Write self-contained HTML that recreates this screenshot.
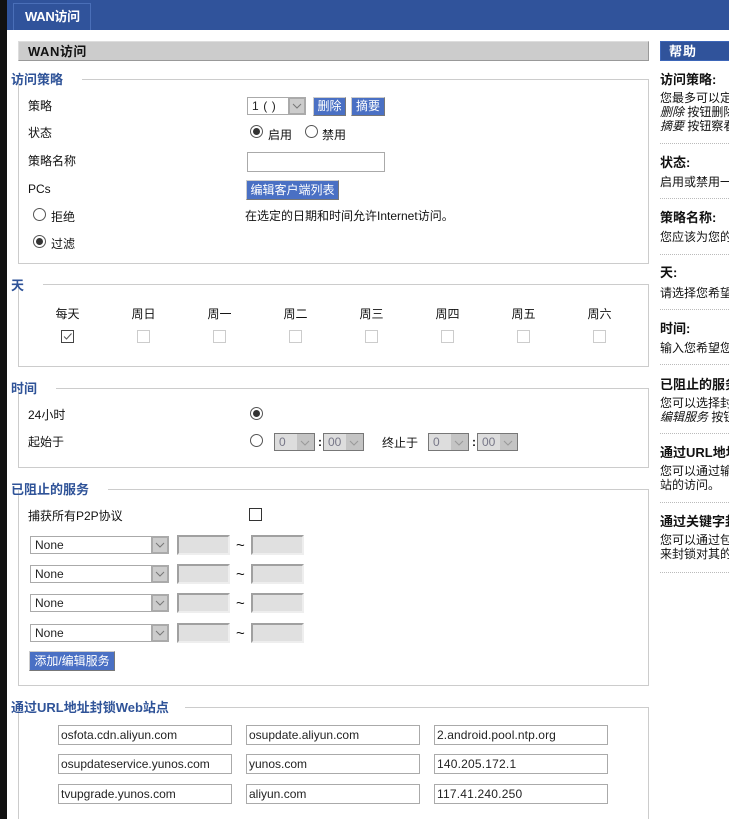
<!DOCTYPE html>
<html lang="zh">
<head>
<meta charset="utf-8">
<title>WAN访问</title>
<style>
html,body{margin:0;padding:0;width:729px;height:819px;overflow:hidden;background:#fff}
body{position:relative;font:12px/14px "Liberation Sans","WenQuanYi Zen Hei","Noto Sans CJK SC",sans-serif;color:#111}
div,span{position:absolute;box-sizing:border-box}
.t{white-space:nowrap;line-height:14px}
.c{transform:translateX(-50%)}
.fs{left:18px;width:631px;border:1px solid #ccc}
.gap{background:#fff;height:2px;left:18px}
.lg{left:11px;height:16px;font-weight:bold;font-size:13px;line-height:16px;color:#2f5398;white-space:nowrap}
.btn{background:#4a70c4;color:#fff;border:1px solid;border-color:#ccc #777 #777 #ccc;text-align:center;line-height:17px;white-space:nowrap}
.r{width:13px;height:13px;border:1px solid #555;border-radius:50%;background:#fff}
.r.on::after{content:"";position:absolute;left:2px;top:2px;width:7px;height:7px;border-radius:50%;background:#333}
.cb{width:13px;height:13px;border:1px solid #ccc;background:#fff}
.sel{height:18px;border:1px solid #aaa;background:#fff;line-height:16px;padding-left:4px;white-space:nowrap;color:#222}
.ar{right:-1px;top:-1px;bottom:-1px;width:18px;background:#ccc;border:2px solid #aaa}
.ar svg{position:absolute;left:2px;top:3px}
.tsel{width:41px;top:433px;height:18px;border:1px solid #777;background:#ddd;color:#778;line-height:16px;padding-left:4px}
.tsel .ar{right:0;top:0;bottom:0;width:17px;background:#c4c4c4;border:0}
.tsel .ar svg{left:3px;top:5px}
.in{height:20px;border:1px solid #aaa;background:#fff;line-height:18px;padding-left:2px;white-space:nowrap;color:#222}
.dis{width:53px;height:20px;background:#e0e0e0;border:2px solid;border-color:#a0a0a0 #eee #eee #a0a0a0}
.tl{font-size:15px;left:236px}
.h{left:660px;white-space:nowrap;font-weight:bold;font-size:13px;line-height:16px;color:#111}
.p{left:660px;white-space:nowrap;line-height:14px}
.d{left:660px;width:69px;border-top:1px dotted #bbb;height:1px}
</style>
</head>
<body>
<div style="left:0;top:0;width:7px;height:819px;background:#111"></div>
<div style="left:7px;top:0;width:722px;height:30px;background:#30539b"></div>
<div style="left:13px;top:3px;width:78px;height:27px;border:1px solid #4a6fb8;border-bottom:0"></div>
<div class="t" style="left:25px;top:10px;color:#fff;font-weight:bold;font-size:13px;letter-spacing:-.3px">WAN访问</div>

<div style="left:18px;top:41px;width:631px;height:20px;background:#ccc;border-top:1px solid #ddd;border-left:1px solid #ddd;border-bottom:1px solid #999;border-right:1px solid #999"></div>
<div class="t" style="left:28px;top:45px;font-weight:bold;font-size:13px;letter-spacing:.5px;color:#111">WAN访问</div>

<div class="fs" style="top:79px;height:185px"></div>
<div class="gap" style="top:78px;width:64px"></div>
<div class="lg" style="top:72px">访问策略</div>
<div class="t" style="left:28px;top:99px">策略</div>
<div class="sel" style="left:247px;top:97px;width:59px;letter-spacing:.6px">1 ( )<span class="ar"><svg width="10" height="8"><path d="M1 2l4 4 4-4" fill="none" stroke="#777"/></svg></span></div>
<div class="btn" style="left:313px;top:97px;width:33px;height:19px">删除</div>
<div class="btn" style="left:351px;top:97px;width:34px;height:19px">摘要</div>
<div class="t" style="left:28px;top:126px">状态</div>
<div class="r on" style="left:250px;top:125px"></div>
<div class="t" style="left:268px;top:128px">启用</div>
<div class="r" style="left:305px;top:125px"></div>
<div class="t" style="left:322px;top:128px">禁用</div>
<div class="t" style="left:28px;top:154px">策略名称</div>
<div class="in" style="left:247px;top:152px;width:138px"></div>
<div class="t" style="left:28px;top:182px">PCs</div>
<div class="btn" style="left:246px;top:180px;width:93px;height:20px;line-height:18px">编辑客户端列表</div>
<div class="r" style="left:33px;top:208px"></div>
<div class="t" style="left:51px;top:210px">拒绝</div>
<div class="t" style="left:245px;top:209px">在选定的日期和时间允许Internet访问。</div>
<div class="r on" style="left:33px;top:235px"></div>
<div class="t" style="left:51px;top:237px">过滤</div>

<div class="fs" style="top:284px;height:83px"></div>
<div class="gap" style="top:283px;width:25px"></div>
<div class="lg" style="top:278px">天</div>
<div class="t c" style="left:67.5px;top:307px">每天</div>
<div class="t c" style="left:143.5px;top:307px">周日</div>
<div class="t c" style="left:219.5px;top:307px">周一</div>
<div class="t c" style="left:295.5px;top:307px">周二</div>
<div class="t c" style="left:371.5px;top:307px">周三</div>
<div class="t c" style="left:447.5px;top:307px">周四</div>
<div class="t c" style="left:523.5px;top:307px">周五</div>
<div class="t c" style="left:599.5px;top:307px">周六</div>
<div class="cb" style="left:61px;top:330px;border-color:#444"><svg width="11" height="11" style="position:absolute;left:0;top:0"><path d="M2 5.5l2.5 2.5L9.5 2.5" fill="none" stroke="#555" stroke-width="1"/></svg></div>
<div class="cb" style="left:137px;top:330px"></div>
<div class="cb" style="left:213px;top:330px"></div>
<div class="cb" style="left:289px;top:330px"></div>
<div class="cb" style="left:365px;top:330px"></div>
<div class="cb" style="left:441px;top:330px"></div>
<div class="cb" style="left:517px;top:330px"></div>
<div class="cb" style="left:593px;top:330px"></div>

<div class="fs" style="top:388px;height:80px"></div>
<div class="gap" style="top:387px;width:38px"></div>
<div class="lg" style="top:381px">时间</div>
<div class="t" style="left:28px;top:408px">24小时</div>
<div class="r on" style="left:250px;top:407px"></div>
<div class="t" style="left:28px;top:435px">起始于</div>
<div class="r" style="left:250px;top:434px"></div>
<div class="tsel" style="left:274px">0<span class="ar"><svg width="10" height="8"><path d="M1 2l4 4 4-4" fill="none" stroke="#999"/></svg></span></div>
<div class="t" style="left:318px;top:435px;font-weight:bold">:</div>
<div class="tsel" style="left:323px">00<span class="ar"><svg width="10" height="8"><path d="M1 2l4 4 4-4" fill="none" stroke="#999"/></svg></span></div>
<div class="t" style="left:382px;top:436px">终止于</div>
<div class="tsel" style="left:428px">0<span class="ar"><svg width="10" height="8"><path d="M1 2l4 4 4-4" fill="none" stroke="#999"/></svg></span></div>
<div class="t" style="left:472px;top:435px;font-weight:bold">:</div>
<div class="tsel" style="left:477px">00<span class="ar"><svg width="10" height="8"><path d="M1 2l4 4 4-4" fill="none" stroke="#999"/></svg></span></div>

<div class="fs" style="top:489px;height:197px"></div>
<div class="gap" style="top:488px;width:90px"></div>
<div class="lg" style="top:482px">已阻止的服务</div>
<div class="t" style="left:28px;top:509px">捕获所有P2P协议</div>
<div class="cb" style="left:249px;top:508px;border-color:#333"></div>

<div class="sel" style="left:30px;top:536px;width:139px">None<span class="ar"><svg width="10" height="8"><path d="M1 2l4 4 4-4" fill="none" stroke="#777"/></svg></span></div>
<div class="dis" style="left:177px;top:535px"></div>
<div class="t tl" style="top:539px">~</div>
<div class="dis" style="left:251px;top:535px"></div>

<div class="sel" style="left:30px;top:565px;width:139px">None<span class="ar"><svg width="10" height="8"><path d="M1 2l4 4 4-4" fill="none" stroke="#777"/></svg></span></div>
<div class="dis" style="left:177px;top:564px"></div>
<div class="t tl" style="top:568px">~</div>
<div class="dis" style="left:251px;top:564px"></div>

<div class="sel" style="left:30px;top:594px;width:139px">None<span class="ar"><svg width="10" height="8"><path d="M1 2l4 4 4-4" fill="none" stroke="#777"/></svg></span></div>
<div class="dis" style="left:177px;top:593px"></div>
<div class="t tl" style="top:597px">~</div>
<div class="dis" style="left:251px;top:593px"></div>

<div class="sel" style="left:30px;top:624px;width:139px">None<span class="ar"><svg width="10" height="8"><path d="M1 2l4 4 4-4" fill="none" stroke="#777"/></svg></span></div>
<div class="dis" style="left:177px;top:623px"></div>
<div class="t tl" style="top:627px">~</div>
<div class="dis" style="left:251px;top:623px"></div>

<div class="btn" style="left:29px;top:651px;width:86px;height:20px;line-height:18px">添加/编辑服务</div>

<div class="fs" style="top:707px;height:130px"></div>
<div class="gap" style="top:706px;width:167px"></div>
<div class="lg" style="top:700px">通过URL地址封锁Web站点</div>
<div class="in" style="left:58px;top:725px;width:174px">osfota.cdn.aliyun.com</div>
<div class="in" style="left:246px;top:725px;width:174px">osupdate.aliyun.com</div>
<div class="in" style="left:434px;top:725px;width:174px;letter-spacing:.1px">2.android.pool.ntp.org</div>
<div class="in" style="left:58px;top:754px;width:174px">osupdateservice.yunos.com</div>
<div class="in" style="left:246px;top:754px;width:174px">yunos.com</div>
<div class="in" style="left:434px;top:754px;width:174px;letter-spacing:.2px">140.205.172.1</div>
<div class="in" style="left:58px;top:784px;width:174px">tvupgrade.yunos.com</div>
<div class="in" style="left:246px;top:784px;width:174px">aliyun.com</div>
<div class="in" style="left:434px;top:784px;width:174px;letter-spacing:.2px">117.41.240.250</div>

<div style="left:660px;top:41px;width:69px;height:20px;background:#30539b;border:1px solid #3d66b8;border-right:0"></div>
<div class="t" style="left:669px;top:45px;color:#fff;font-weight:bold;font-size:13px;letter-spacing:1px">帮助</div>

<div class="h" style="top:72px">访问策略:</div>
<div class="p" style="top:91px">您最多可以定义</div>
<div class="p" style="top:105px"><i>删除</i> 按钮删除</div>
<div class="p" style="top:119px"><i>摘要</i> 按钮察看</div>
<div class="d" style="top:143px"></div>
<div class="h" style="top:155px">状态:</div>
<div class="p" style="top:175px">启用或禁用一</div>
<div class="d" style="top:198px"></div>
<div class="h" style="top:210px">策略名称:</div>
<div class="p" style="top:230px">您应该为您的</div>
<div class="d" style="top:254px"></div>
<div class="h" style="top:265px">天:</div>
<div class="p" style="top:286px">请选择您希望</div>
<div class="d" style="top:309px"></div>
<div class="h" style="top:321px">时间:</div>
<div class="p" style="top:341px">输入您希望您</div>
<div class="d" style="top:364px"></div>
<div class="h" style="top:377px">已阻止的服务</div>
<div class="p" style="top:396px">您可以选择封</div>
<div class="p" style="top:410px"><i>编辑服务</i> 按钮</div>
<div class="d" style="top:433px"></div>
<div class="h" style="top:445px">通过URL地址</div>
<div class="p" style="top:464px">您可以通过输</div>
<div class="p" style="top:478px">站的访问。</div>
<div class="d" style="top:502px"></div>
<div class="h" style="top:514px">通过关键字封</div>
<div class="p" style="top:533px">您可以通过包</div>
<div class="p" style="top:547px">来封锁对其的</div>
<div class="d" style="top:572px"></div>
</body>
</html>
